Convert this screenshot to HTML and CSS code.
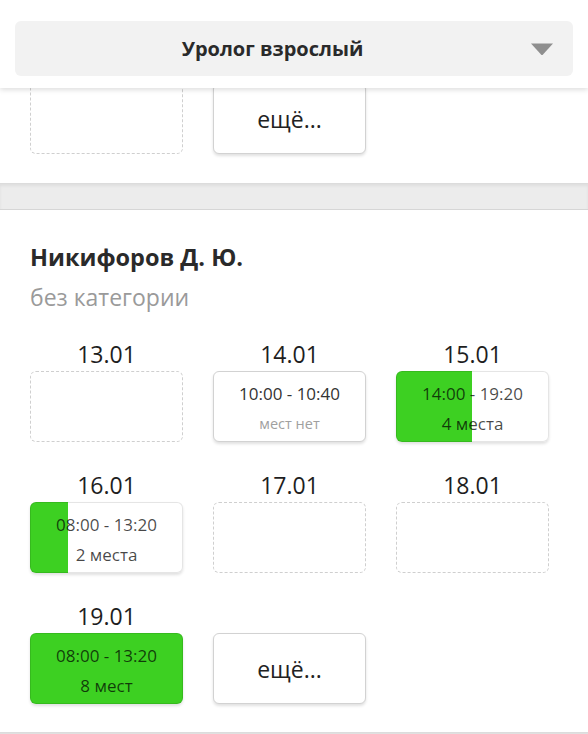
FILE: index.html
```html
<html>
	<head>
		<meta charset="utf-8"/>
		<title>Запись к врачу</title>
		<link rel="stylesheet" href="styles.css">
	</head>
	<body>
		<div class="topbar">
			<div class="select">
				<div class="select-label">Уролог взрослый</div>
				<svg class="select-arrow" width="24" height="14" viewBox="0 0 24 14">
					<path d="M1 1.5 L23 1.5 L13 12.5 Q12 13.5 11 12.5 Z" fill="#8f8f8f"/>
				</svg>
			</div>
		</div>

		<div class="doctor doctor-prev">
			<div class="days">
				<div class="day">
					<div class="day-date">11.01</div>
					<div class="slot slot-empty"></div>
				</div>
				<div class="day">
					<div class="day-date">&nbsp;</div>
					<div class="slot slot-more">ещё...</div>
				</div>
			</div>
		</div>

		<div class="divider"></div>

		<div class="doctor">
			<div class="doctor-name">Никифоров Д. Ю.</div>
			<div class="doctor-cat">без категории</div>
			<div class="days">
				<div class="day">
					<div class="day-date">13.01</div>
					<div class="slot slot-empty"></div>
				</div>
				<div class="day">
					<div class="day-date">14.01</div>
					<div class="slot">
						<div class="slot-time">10:00 - 10:40</div>
						<div class="slot-seats slot-none">мест нет</div>
					</div>
				</div>
				<div class="day">
					<div class="day-date">15.01</div>
					<div class="slot slot-free" style="--fill: 50%">
						<div class="slot-time">14:00 - 19:20</div>
						<div class="slot-seats">4 места</div>
					</div>
				</div>
				<div class="day">
					<div class="day-date">16.01</div>
					<div class="slot slot-free" style="--fill: 25%">
						<div class="slot-time">08:00 - 13:20</div>
						<div class="slot-seats">2 места</div>
					</div>
				</div>
				<div class="day">
					<div class="day-date">17.01</div>
					<div class="slot slot-empty"></div>
				</div>
				<div class="day">
					<div class="day-date">18.01</div>
					<div class="slot slot-empty"></div>
				</div>
				<div class="day">
					<div class="day-date">19.01</div>
					<div class="slot slot-free" style="--fill: 100%">
						<div class="slot-time">08:00 - 13:20</div>
						<div class="slot-seats">8 мест</div>
					</div>
				</div>
				<div class="day">
					<div class="day-date">&nbsp;</div>
					<div class="slot slot-more">ещё...</div>
				</div>
			</div>
		</div>

		<div class="divider"></div>
	</body>
</html>
```

FILE: styles.css
```css
body {
	margin: 0;
	font-family: "Open Sans", "Noto Sans", sans-serif;
	color: #222;
	background: #fff;
}
.topbar {
	position: fixed;
	top: 0;
	left: 0;
	right: 0;
	z-index: 10;
	height: 88px;
	box-sizing: border-box;
	padding: 21px 15px 0 15px;
	background: #fff;
	box-shadow: 0 2px 5px rgba(0, 0, 0, 0.13);
}
.select {
	display: flex;
	align-items: center;
	height: 55px;
	padding: 0 19px 0 0;
	background: #f2f2f2;
	border-radius: 6px;
}
.select-label {
	flex-grow: 1;
	text-align: center;
	font-size: 20px;
	font-weight: bold;
	color: #2a2a2a;
}
.select-arrow {
	flex-shrink: 0;
}
.doctor {
	padding: 33px 0 28px 30px;
}
.doctor-prev {
	padding-top: 52px;
	padding-bottom: 29px;
}
.doctor-name {
	font-size: 23.5px;
	line-height: 28px;
	font-weight: bold;
	color: #2a2a2a;
}
.doctor-cat {
	margin-top: 12px;
	font-size: 23px;
	line-height: 28px;
	color: #9a9a9a;
}
.days {
	display: grid;
	grid-template-columns: repeat(3, 153px);
	column-gap: 30px;
	row-gap: 29px;
	margin-top: 29px;
}
.doctor-prev .days {
	margin-top: 0;
}
.day-date {
	font-size: 23px;
	line-height: 28px;
	text-align: center;
	margin-bottom: 3px;
	color: #1e1e1e;
}
.slot {
	height: 71px;
	box-sizing: border-box;
	padding-top: 10px;
	border: 1px solid #d2d2d2;
	border-radius: 6px;
	background: #fff;
	box-shadow: 0 2px 3px rgba(0, 0, 0, 0.12);
	text-align: center;
	color: #333;
}
.slot-empty {
	border: 1.5px dashed #cfcfcf;
	box-shadow: none;
}
.slot-more {
	display: flex;
	align-items: center;
	justify-content: center;
	padding-top: 0;
	font-size: 23px;
	color: #222;
}
.slot-free {
	border-color: rgba(0, 0, 0, 0.1);
	background: linear-gradient(to right, #3dd022 var(--fill), #fff var(--fill));
	background-origin: border-box;
	background-repeat: no-repeat;
	color: rgba(0, 0, 0, 0.72);
}
.slot-time {
	font-size: 17px;
	line-height: 24px;
}
.slot-seats {
	margin-top: 7px;
	font-size: 17px;
	line-height: 22px;
}
.slot-none {
	font-size: 14.5px;
	color: #a0a0a0;
}
.divider {
	height: 27px;
	box-sizing: border-box;
	background: #ececec;
	border-top: 1px solid #dcdcdc;
	border-bottom: 1px solid #d6d6d6;
	box-shadow: inset 0 2px 3px rgba(0, 0, 0, 0.06);
}
```
